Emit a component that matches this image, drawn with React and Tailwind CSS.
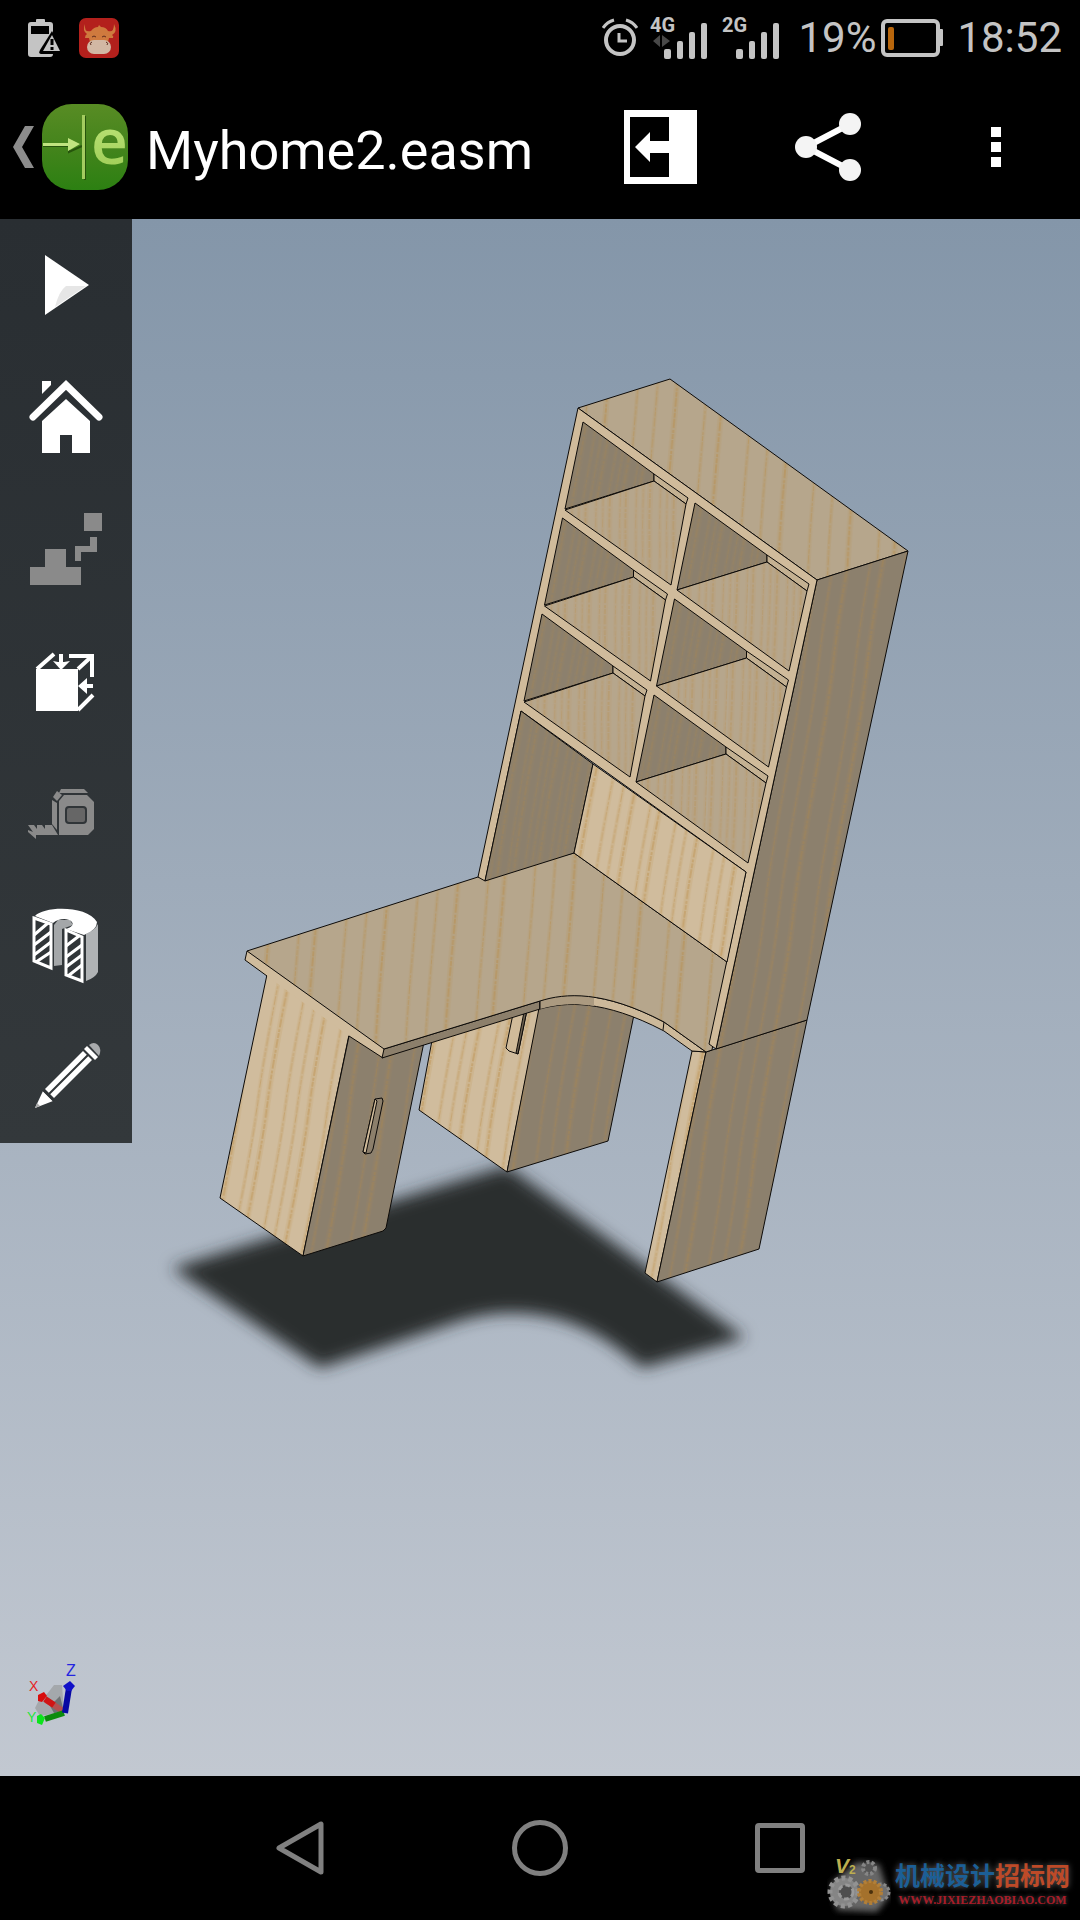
const shelfRows = [0, 1, 2];

const grainLines = [0, 1, 2, 3, 4, 5, 6, 7];

const toolButton =
    "flex h-[132px] w-full items-center justify-center";

// Status bar

function SignalBars({ label, data }) {

    return (

        <svg viewBox="-2 -8 62 60" className="h-[60px] w-[62px]" fill="#c4c4c4">

            <text
                x="0"
                y="16"
                fontSize="20"
                fontWeight="700"
                className="font-[Roboto,sans-serif]"
            >
                {label}
            </text>

            {data && (
                <path d="M3 25 L10 19 V31 Z M12 19 L20 25 L12 31 Z" fill="#484848" />
            )}

            <rect x="14" y="33" width="7" height="10" rx="2" />
            <rect x="27" y="25" width="6" height="18" rx="2" />
            <rect x="39" y="16" width="6" height="27" rx="2" />
            <rect x="51" y="7" width="6" height="36" rx="2" />

        </svg>

    );

}

function StatusBar() {

    return (

        <div className="flex h-[75px] items-center justify-between bg-black pl-[27px] pr-[18px] text-[42px] leading-none text-[#c4c4c4]">

            <div className="flex items-center gap-[18px]">

                <svg viewBox="0 0 34 40" className="h-[40px] w-[34px]">
                    <path
                        d="M9 2 Q9 1 10 1 H17 Q18 1 18 2 V4 H23 Q26 4 26 7 V36 Q26 39 23 39 H4 Q1 39 1 36 V7 Q1 4 4 4 H9 Z"
                        fill="#c4c4c4"
                    />
                    <path d="M4 8 H22 V16 H4 Z" fill="#000" />
                    <path d="M25 13 L38 36 H14 Q11 36 13 32 Z" fill="#000" />
                    <path d="M25 17 L33 33 H16 Z" fill="#c4c4c4" />
                    <path d="M25 21 V27 M25 29 V32" stroke="#000" strokeWidth="3" />
                </svg>

                <svg viewBox="0 0 40 40" className="h-[40px] w-[40px]">
                    <rect width="40" height="40" rx="7" fill="#b3201c" />
                    <path
                        d="M6 6 Q5 15 12 13 Q15 9 19 9 L20 7 L22 9 Q27 9 29 13 Q35 15 35 6 Q39 14 33 17 Q35 18 34 20 H30 L29 24 H11 L10 20 H6 Q6 17 8 16 Q3 13 6 6 Z"
                        fill="#cf7a3e"
                    />
                    <rect x="8" y="22" width="24" height="14" rx="7" fill="#d2b8a4" />
                    <path
                        d="M13 19 Q15 17 17 19 M23 19 Q25 17 27 19 M12 27 Q10 25 13 24 M28 27 Q30 25 27 24"
                        fill="none"
                        stroke="#5d2a1c"
                        strokeWidth="1"
                    />
                </svg>

            </div>

            <div className="flex items-center">

                <svg
                    viewBox="0 0 36 40"
                    className="mr-[10px] h-[40px] w-[36px]"
                    fill="none"
                    stroke="#c4c4c4"
                    strokeWidth="4"
                >
                    <circle cx="18" cy="22" r="14" />
                    <path d="M17 15 V23 H25" strokeWidth="3" />
                    <path d="M1 10 Q5 4 12 2 M24 2 Q31 4 35 10" strokeWidth="3" />
                </svg>

                <div className="mr-[10px]">
                    <SignalBars label="4G" data />
                </div>

                <div className="mr-[16px]">
                    <SignalBars label="2G" />
                </div>

                <span>19%</span>

                <svg viewBox="0 0 62 38" className="ml-[5px] mr-[14px] h-[38px] w-[62px]">
                    <rect
                        x="2"
                        y="2"
                        width="55"
                        height="34"
                        rx="4"
                        fill="none"
                        stroke="#c4c4c4"
                        strokeWidth="4"
                    />
                    <rect x="58" y="10" width="4" height="17" rx="1" fill="#c4c4c4" />
                    <rect x="7" y="8" width="6" height="23" rx="2" fill="#b8660c" />
                </svg>

                <span>18:52</span>

            </div>

        </div>

    );

}

// Action bar

function AppLogo() {

    return (

        <svg viewBox="0 0 92 92" className="ml-[8px] h-[92px] w-[92px]">

            <defs>
                <linearGradient id="logo-bg" x1="0" y1="0" x2="0" y2="1">
                    <stop offset="0" stopColor="#588c24" />
                    <stop offset="0.5" stopColor="#44841c" />
                    <stop offset="1" stopColor="#2c8012" />
                </linearGradient>
                <linearGradient id="logo-fg" x1="0" y1="0" x2="0" y2="1">
                    <stop offset="0" stopColor="#c8ec84" />
                    <stop offset="1" stopColor="#98c850" />
                </linearGradient>
            </defs>

            <g>
                <rect y="3" width="86" height="86" rx="30" fill="url(#logo-bg)" />
                <path d="M1 45 H27 V51 L40 45 M43 15 V79" fill="none" stroke="#26540c" strokeWidth="2" />
                <rect x="40" y="14" width="3" height="64" fill="#a4cc60" />
                <path d="M1 42 H26 V37 L38 43 L26 50 V45 H1 Z" fill="#c0e480" />
                <text
                    x="49"
                    y="63"
                    fontSize="64"
                    fontWeight="600"
                    fill="url(#logo-fg)"
                    className="font-['Open_Sans',sans-serif]"
                >
                    e
                </text>
            </g>

        </svg>

    );

}

function ActionBar() {

    return (

        <header className="flex h-[144px] items-center justify-between bg-black text-white">

            <a href="#files" className="flex items-center pl-[13px]">

                <svg viewBox="0 0 21 42" className="h-[42px] w-[21px]">
                    <path d="M12 0 H21 L9 21 L21 42 H12 L0 21 Z" fill="#8c8c8c" />
                </svg>

                <AppLogo />

                <h1 className="ml-[12px] pt-[7px] text-[54px] leading-[64px]">
                    Myhome2.easm
                </h1>

            </a>

            <div className="flex">

                <button aria-label="Open" className="flex w-[168px] items-center justify-center">
                    <svg viewBox="0 0 74 74" className="h-[74px] w-[74px]">
                        <rect x="1" width="73" height="74" fill="#fff" />
                        <rect x="7" y="7" width="39" height="60" fill="#000" />
                        <path d="M12 37 L27 22 V31 H46 V43 H27 V52 Z" fill="#fff" />
                    </svg>
                </button>

                <button aria-label="Share" className="flex w-[168px] items-center justify-center">
                    <svg viewBox="0 0 70 70" className="h-[70px] w-[70px]" fill="#f4f4f4">
                        <path d="M57 12 L13 35 L57 58" fill="none" stroke="#fff" strokeWidth="6" />
                        <circle cx="13" cy="35" r="11" />
                        <circle cx="57" cy="12" r="11" />
                        <circle cx="57" cy="58" r="11" />
                    </svg>
                </button>

                <button
                    aria-label="More options"
                    className="flex w-[168px] flex-col items-center justify-center gap-[5px]"
                >
                    <span className="h-[10px] w-[10px] bg-white"></span>
                    <span className="h-[10px] w-[10px] bg-white"></span>
                    <span className="h-[10px] w-[10px] bg-white"></span>
                </button>

            </div>

        </header>

    );

}

// Tool column

const tools = [
    {
        name: "Play",
        icon: (
            <>
                <path d="M45 36 L89 66 L45 96 Z" fill="#fff" />
                <path d="M86 67 H66 Q59 72 55 88 Z" fill="#e6e6e6" />
            </>
        )
    },
    {
        name: "Home",
        icon: (
            <>
                <path
                    d="M33 66 L66 34 L99 66"
                    fill="none"
                    stroke="#fff"
                    strokeWidth="7"
                    strokeLinecap="round"
                />
                <path d="M42 30 H51 V34 L42 43 Z" fill="#fff" />
                <path d="M66 48 L90 70 V102 H72 V84 H60 V102 H42 V70 Z" fill="#fff" />
            </>
        )
    },
    {
        name: "Explode",
        icon: (
            <path
                d="M84 30 H102 V48 H84 Z M90 54 H97 V69 H81 V78 H75 V63 H90 Z M30 84 H45 V66 H66 V84 H81 V102 H30 Z"
                fill="#8a8a8a"
            />
        )
    },
    {
        name: "Views",
        icon: (
            <g stroke="#fff" strokeWidth="4" fill="none">
                <rect x="36" y="54" width="42" height="42" fill="#fff" stroke="none" />
                <path d="M37 54 L54 39 M69 41 H92 V62 M78 54 L91 42 M78 95 L93 80 M61 39 V49 M93 71 H84" />
                <path d="M53 46 L58 47 H64 L70 46 L61 55 Z M78 71 L87 63 V79 Z" fill="#fff" stroke="none" />
            </g>
        )
    },
    {
        name: "Measure",
        icon: (
            <g fill="#8a8a8a">
                <path d="M59 46 L61 42 H84 L88 46 Z" />
                <path d="M52 53 L57 56 V83 L52 77 Z" />
                <path d="M57 44 L62 48 L57 54 L53 50 Z" />
                <path d="M64 48 H87 L94 55 V82 L88 88 H59 V54 Z" />
                <path d="M28 78 H34 L37 82 V78 H42 L45 82 V78 H52 L58 88 H36 V92 L28 85 V83 L33 85 Z" />
                <rect x="66" y="60" width="20" height="16" rx="3" fill="#666" stroke="#303538" strokeWidth="2" />
            </g>
        )
    },
    {
        name: "Section",
        icon: (
            <>
                <path d="M86 55 Q95 51 98 45 V93 Q95 99 86 102 Z" fill="#b0b3b5" />
                <path d="M54 46 V87 L62 86 V50 L73 46 L70 41 H58 Z" fill="#a4a7a9" />
                <path
                    d="M35 37 C44 27 87 26 97 43 Q97 51 84 56 L66 50 Q75 47 72 43 C67 38 58 40 53 44 Z"
                    fill="#fff"
                />
                <g fill="#303538" stroke="#fff" strokeWidth="3">
                    <path d="M34 39 L51 45 V89 L34 82 Z M66 51 L82 58 V102 L66 96 Z" />
                    <path d="M34 56 L48 44 M34 66 L51 53 M34 76 L51 63 M36 83 L51 73 M66 67 L79 57 M66 78 L82 66 M66 88 L82 76 M68 97 L82 86" />
                </g>
            </>
        )
    },
    {
        name: "Markup",
        icon: (
            <>
                <path d="M35 97 L43 80 L53 90 Z" fill="#fff" />
                <path d="M35 97 L37 92 L40 95 Z" fill="#aaa" />
                <path d="M45 78 L83 40 L92 49 L54 87 Z" fill="#fff" />
                <path d="M49 83 L88 44 M43 79 L54 90" stroke="#303538" strokeWidth="2" />
                <path d="M84 38 L87 35 L98 46 L95 49 Z" fill="#fff" />
                <path d="M89 34 Q94 30 98 34 Q102 38 99 45 Z" fill="#a9abad" />
            </>
        )
    }
];

function ToolColumn() {

    return (

        <nav className="absolute left-0 top-0 w-[132px] bg-gradient-to-b from-[#292e32] to-[#33383b]">

            {tools.map((tool) => (

                <button key={tool.name} aria-label={tool.name} className={toolButton}>
                    <svg viewBox="0 0 132 132" className="h-[132px] w-[132px]">
                        {tool.icon}
                    </svg>
                </button>

            ))}

        </nav>

    );

}

// 3D model

function Grain({ id, color, step, tilt, opacity }) {

    const width = step * 8;

    return (

        <pattern
            id={id}
            width={width}
            height="260"
            patternUnits="userSpaceOnUse"
            patternTransform={`rotate(${tilt})`}
        >
            <rect width={width} height="260" fill={color} />
            <g fill="none" stroke="#b98840">
                {grainLines.map((i) => {

                    const x = step * (i + 0.5) + ((i * 5) % 3) * step * 0.15;
                    const curve = `M${x} 0 C${x + 4} 80 ${x - 4} 180 ${x} 260`;

                    return (
                        <g key={i}>
                            <path d={curve} strokeWidth={i % 3 === 0 ? 6 : 4} opacity={opacity * 0.4} />
                            <path
                                d={curve}
                                strokeWidth={i % 3 === 0 ? 2 : 1}
                                strokeDasharray="5 1 9 2 3 1"
                                opacity={opacity}
                            />
                        </g>
                    );

                })}
            </g>
        </pattern>

    );

}

function Cubby({ wall, strip, floor }) {

    return (

        <g>
            <path d={wall} fill="url(#wood-inner)" />
            <path d={strip} fill="#c4b192" />
            <path d={floor} fill="url(#wood-shelf)" />
        </g>

    );

}

function Model() {

    return (

        <svg viewBox="0 219 1080 1557" className="block w-full" role="img" aria-label="Desk with shelves">

            <defs>
                <Grain id="wood-top" color="#b6a68c" step={23} tilt={4} opacity={0.38} />
                <Grain id="wood-light" color="#d0bc9d" step={14} tilt={10} opacity={0.36} />
                <Grain id="wood-dark" color="#8c806d" step={17} tilt={9} opacity={0.24} />
                <Grain id="wood-inner" color="#8c806d" step={8} tilt={9} opacity={0.16} />
                <Grain id="wood-shelf" color="#b6a68c" step={8} tilt={2} opacity={0.24} />
                <filter id="soft" x="-10%" y="-20%" width="120%" height="140%">
                    <feGaussianBlur stdDeviation="8" />
                </filter>
            </defs>

            <path
                d="M172 1268 L507 1166 L745 1338 L642 1368 C600 1331 562 1313 510 1313 Q487 1313 460 1321 L320 1368 Z"
                fill="#292d2f"
                filter="url(#soft)"
            />

            <g stroke="#0c0a08" strokeWidth="1" strokeLinejoin="round">

                {/* Rear cabinet */}
                <path d="M433 1035 L419 1110 L507 1172 L541 1003 Z" fill="url(#wood-light)" />
                <path d="M540 1003 L507 1172 L608 1141 L636 1005 Z" fill="url(#wood-dark)" />
                <path d="M513 1014 L506 1048 L509 1051 L518 1054 L527 1010 Z" fill="#d0bb9a" />
                <path d="M524 1012 L516 1053 L518 1054 L527 1010 Z" fill="#6e6250" />

                {/* Left cabinet */}
                <path d="M269 965 L220 1198 L303 1256 L350 1030 Z" fill="url(#wood-light)" />
                <path d="M349 1036 L303 1256 L383 1231 L386 1228 L424 1042 L380 1040 Z" fill="url(#wood-dark)" />
                <path d="M375 1099 L382 1098 L383 1101 L373 1149 L371 1153 L365 1154 L363 1152 Z" fill="#8c7f6b" />
                <path d="M375 1099 L377 1101 L366 1153 L363 1152 Z" fill="#d0bb9a" />

                {/* Right leg */}
                <path d="M692 1051 L645 1273 L657 1282 L706 1052 Z" fill="url(#wood-light)" />
                <path d="M706 1052 L657 1282 L759 1249 L807 1020 Z" fill="url(#wood-dark)" />

                {/* Desk edges */}
                <path d="M247 951 L245 960 L267 976 L349 1036 L383 1058 L384 1049 Z" fill="#d0bc9d" stroke="none" />
                <path d="M247 951 L245 960 L267 976 M349 1036 L383 1058" fill="none" />
                <path d="M384 1049 L382 1058 L540 1009 V1001 Z" fill="#8c7f6b" />
                <path
                    d="M540 1001 C565 993 603 990 664 1022 L706 1052 L692 1051 L664 1031 C603 999 565 1002 540 1009 Z"
                    fill="#cdb99a"
                />
                <path d="M540 1001 C556 995 575 993 594 997 V1006 C575 1003 556 1004 540 1009 Z" fill="#ab9a80" stroke="none" />
                <path d="M540 1001 V1009 M664 1022 L663 1030" />

                {/* Desk top */}
                <path
                    d="M247 951 L478 877 L574 853 L727 962 L712 1050 L706 1052 L664 1022 C603 990 565 993 540 1001 L384 1049 Z"
                    fill="url(#wood-top)"
                />

                {/* Bookcase */}
                <path d="M578 408 L670 379 L908 551 L817 580 Z" fill="url(#wood-top)" />
                <path d="M817 580 L908 551 L807 1020 L716 1049 Z" fill="url(#wood-dark)" />
                <path
                    d="M578 408 L817 580 L716 1049 L709 1044 L746 872 L521 711 L485 881 L478 877 Z"
                    fill="#d0bb9b"
                />
                <path d="M521 711 L593 764 L574 853 L485 881 Z" fill="url(#wood-inner)" />
                <path d="M593 764 L746 872 L727 962 L574 853 Z" fill="url(#wood-light)" />

                {shelfRows.map((row) => (

                    <g key={row} transform={`translate(${row * -20.5} ${row * 96})`}>
                        <Cubby
                            wall="M583 422 L654 474 V481 L565 509 Z"
                            strip="M654 474 L688 498 L686 504 L654 481 Z"
                            floor="M565 510 L654 481 L686 504 L671 585 Z"
                        />
                        <Cubby
                            wall="M695 503 L767 555 V562 L677 590 Z"
                            strip="M767 555 L809 584 L807 591 L767 562 Z"
                            floor="M677 590 L767 562 L807 591 L789 671 Z"
                        />
                    </g>

                ))}

            </g>

            {/* Axis triad */}
            <g className="font-['Liberation_Sans',sans-serif]">
                <path d="M47 1694 L54 1685 H62 L64 1712 L40 1716 L35 1708 L38 1702 Z" fill="#a4a8ac" />
                <path d="M50 1706 L60 1696 L64 1712 L54 1713 Z" fill="#6f7375" />
                <path d="M63 1711 L46 1700" stroke="#b45050" strokeWidth="6" />
                <path d="M54 1705 L45 1699" stroke="#d01414" strokeWidth="6" />
                <path d="M38 1695 L44 1692 L47 1696 L42 1702 L38 1701 Z" fill="#d80c0c" />
                <path d="M64 1713 L45 1719" stroke="#0c8c0c" strokeWidth="6" />
                <path d="M37 1716 L41 1714 L45 1718 L42 1725 L37 1723 Z" fill="#0ce41c" />
                <path d="M65 1713 L69 1688" stroke="#0808a4" strokeWidth="6" />
                <path d="M63 1686 L70 1681 L75 1686 L71 1691 H67 Z" fill="#1010c8" />
                <text x="66" y="1676" fontSize="16" fill="#2424e0">Z</text>
                <text x="29" y="1691" fontSize="14" fill="#e42424">X</text>
                <text x="27" y="1722" fontSize="14" fill="#24e43c">Y</text>
            </g>

        </svg>

    );

}

// Bottom

function SystemNav() {

    return (

        <footer className="relative flex h-[144px] justify-center bg-black">

            <button aria-label="Back" className="flex w-60 items-center justify-center">
                <svg viewBox="0 0 56 56" className="h-[56px] w-[56px]" fill="none" stroke="#808080" strokeWidth="5" strokeLinejoin="round">
                    <path d="M49 4 V52 L7 28 Z" />
                </svg>
            </button>

            <button aria-label="Home screen" className="flex w-60 items-center justify-center">
                <span className="h-[56px] w-[56px] rounded-full border-5 border-[#808080]"></span>
            </button>

            <button aria-label="Recent apps" className="flex w-60 items-center justify-center">
                <span className="h-[50px] w-[50px] rounded-[4px] border-5 border-[#808080]"></span>
            </button>

            <div className="absolute bottom-[4px] right-[10px] flex items-center gap-[4px]">

                <svg viewBox="0 -4 64 64" className="h-[64px] w-[64px]">
                    <defs>
                        <filter id="gear-glow">
                            <feGaussianBlur stdDeviation="3" />
                        </filter>
                    </defs>
                    <path d="M4 28 L30 6 L52 8 L62 40 L50 56 L10 54 Z" fill="#666" filter="url(#gear-glow)" />
                    <circle cx="54" cy="36" r="8" fill="#707070" stroke="#888" strokeWidth="3" strokeDasharray="3 2" />
                    <circle cx="42" cy="12" r="6" fill="#555" stroke="#858585" strokeWidth="4" strokeDasharray="3 2" />
                    <circle cx="17" cy="36" r="14" fill="#858585" stroke="#929292" strokeWidth="5" strokeDasharray="4 3" />
                    <circle cx="19" cy="36" r="7" fill="#4e4e4e" stroke="#9a9a9a" strokeWidth="3" strokeDasharray="5 3" />
                    <circle cx="43" cy="36" r="11" fill="#a4712c" stroke="#b27f38" strokeWidth="4" strokeDasharray="3 2" />
                    <circle cx="44" cy="36" r="2" fill="#4a300c" />
                    <text x="8" y="17" fontSize="21" fill="#bcae50" className="font-['Liberation_Sans',sans-serif] font-bold italic">V</text>
                    <text x="22" y="18" fontSize="12" fill="#bcae50" className="font-['Liberation_Sans',sans-serif] font-bold">2</text>
                </svg>

                <div className="flex flex-col items-center pb-[4px]">
                    <p className="font-['Noto_Sans_CJK_SC',sans-serif] text-[25px] font-bold leading-[36px] text-[#1c5f96] [text-shadow:0_0_6px_#666]">
                        机械设计<span className="text-[#bd4a28]">招标网</span>
                    </p>
                    <a
                        href="#site"
                        className="font-['Liberation_Serif',serif] text-[12px] font-bold leading-[16px] text-[#a81c28] [text-shadow:0_0_4px_#555]"
                    >
                        WWW.JIXIEZHAOBIAO.COM
                    </a>
                </div>

            </div>

        </footer>

    );

}

export default function App() {

    return (

        <div className="flex w-full flex-col bg-black font-[Roboto,sans-serif]">

            <StatusBar />

            <ActionBar />

            <main className="relative bg-gradient-to-b from-[#8496a9] to-[#c2c8d1]">
                <Model />
                <ToolColumn />
            </main>

            <SystemNav />

        </div>

    );

}
